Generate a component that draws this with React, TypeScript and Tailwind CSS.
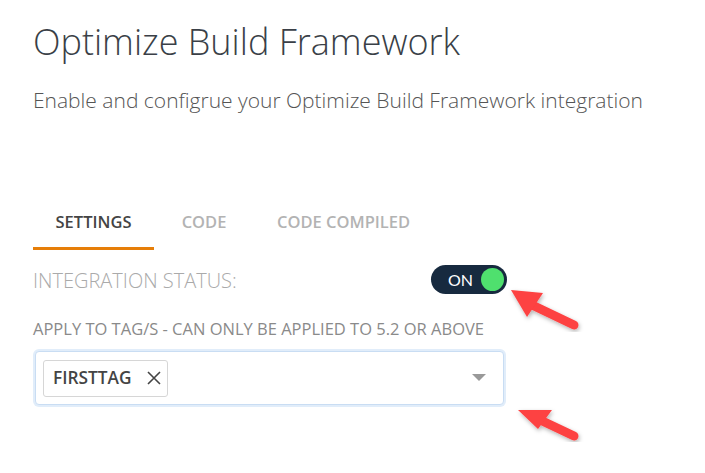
import React from "react";

export default function App() {
  return (
    <div className="relative w-[705px] h-[473px] bg-white overflow-hidden" style={{ fontFamily: '"Open Sans", sans-serif' }}>
      <div className="pl-[33px] pt-[18px] w-[480px]">
        <h1 className="text-[36px] leading-[48px] font-light text-[#3a3f47] whitespace-nowrap">Optimize Build Framework</h1>
        <p className="mt-[21px] text-[21px] leading-[26px] font-light text-[#555] whitespace-nowrap">
          Enable and configrue your Optimize Build Framework integration
        </p>
        <div className="mt-[98px] flex items-end text-[16.5px] leading-[22px] font-semibold">
          <div className="w-[121px] pb-[14px] border-b-[3px] border-[#e67e08] text-center text-[#444]">SETTINGS</div>
          <div className="w-[100px] pb-[14px] text-center text-[#b3b3b3] border-b-[3px] border-transparent">CODE</div>
          <div className="pl-[23px] pb-[14px] text-[#b3b3b3] border-b-[3px] border-transparent">CODE COMPILED</div>
        </div>
        <div className="mt-[13px] flex items-center justify-between w-[474px]">
          <span className="mt-[3px] text-[20px] text-[#aaa] font-light">INTEGRATION STATUS:</span>
          <div className="w-[76px] h-[29px] rounded-full bg-[#172a3f] flex items-center pl-[17px] pr-[3px] justify-between">
            <span className="text-white text-[16px]" style={{ fontFamily: "Lato, sans-serif" }}>ON</span>
            <span className="w-[23px] h-[23px] rounded-full bg-[#4fe06e]" />
          </div>
        </div>
        <div className="mt-[22px] text-[16.5px] leading-[22px] text-[#8a8a8a] whitespace-nowrap">APPLY TO TAG/S - CAN ONLY BE APPLIED TO 5.2 OR ABOVE</div>
        <div className="mt-[9px] w-[473px] rounded-[6px] p-[2px] bg-[#e1edfa]">
          <div className="h-[54px] rounded-[4px] border border-[#c9ddf3] bg-white flex items-center pl-[7px] pr-[17px] justify-between">
            <div className="h-[37px] flex items-center rounded-[3px] border border-[#d6d6d6] pl-[9px] pr-[6px] gap-[15px]">
              <span className="text-[17.3px] font-semibold text-[#444]">FIRSTTAG</span>
              <svg width="14" height="14" viewBox="0 0 14 14"><path d="M1 1 L13 13 M13 1 L1 13" stroke="#444" strokeWidth="1.6" /></svg>
            </div>
            <svg width="14" height="8" viewBox="0 0 14 8"><path d="M0 0 H14 L7 7 Z" fill="#999" /></svg>
          </div>
        </div>
      </div>
      <svg className="absolute left-0 top-0" width="705" height="473" viewBox="0 0 705 473">
        <defs>
          <filter id="sh" x="-20%" y="-20%" width="140%" height="140%">
            <feDropShadow dx="1" dy="2" stdDeviation="2" floodColor="#000" floodOpacity="0.3" />
          </filter>
        </defs>
        <g filter="url(#sh)">
          <line x1="530" y1="304" x2="574" y2="325" stroke="#fd4242" strokeWidth="9" strokeLinecap="round" />
          <polygon points="511,290 543,293 527,317" fill="#fd4242" />
        </g>
        <g filter="url(#sh)">
          <line x1="536" y1="418" x2="574" y2="436" stroke="#fd4242" strokeWidth="9" strokeLinecap="round" />
          <polygon points="518,410 552,410 538,429" fill="#fd4242" />
        </g>
      </svg>
    </div>
  );
}
